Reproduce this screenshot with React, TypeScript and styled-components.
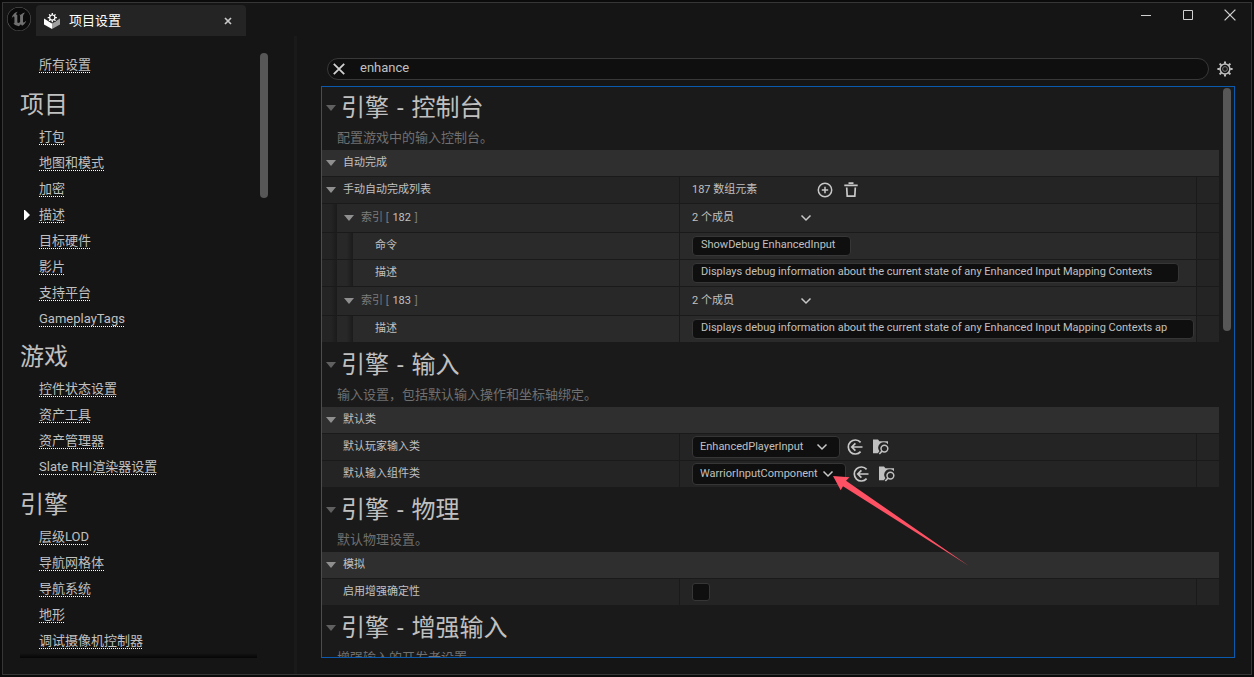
import React from "react";
import styled, { createGlobalStyle } from "styled-components";
import { SiUnrealengine } from "react-icons/si";

const GlobalStyle = createGlobalStyle`
  * { box-sizing: border-box; }
  html, body { margin: 0; padding: 0; background: #0b0b0b; }
  body, button, input, select {
    font-family: Roboto, "Noto Sans CJK SC", sans-serif;
    font-size: 11px;
    line-height: 16px;
    color: #c0c0c0;
  }
  h1, h2, p, ul { margin: 0; padding: 0; font-weight: 400; }
  svg { display: block; flex: none; }
`;

const Desktop = styled.div`
  display: flex;
  height: 100vh;
  padding: 2px;
`;

const Window = styled.div`
  flex: 1;
  min-width: 0;
  display: flex;
  flex-direction: column;
  background: #151515;
  border: 1px solid #363636;
`;

const TitleBar = styled.header`
  display: flex;
  flex: none;
  height: 33px;
  padding-left: 4px;
`;

const Logo = styled.div`
  width: 24px;
  height: 24px;
  margin: 4px 5px 0 0;
  border-radius: 50%;
  background: #0a0a0a;
  color: #707070;
`;

const Tab = styled.div`
  display: flex;
  align-items: center;
  width: 210px;
  margin-top: 2px;
  padding: 0 12px 0 8px;
  border-radius: 4px 4px 0 0;
  background: #242424;
`;

const TabTitle = styled.h1`
  flex: 1;
  margin-left: 9px;
  font-size: 13px;
  line-height: 16px;
  color: #ffffff;
`;

const IconButton = styled.button<{ $w?: number }>`
  display: flex;
  align-items: center;
  justify-content: center;
  flex: none;
  width: ${(p) => p.$w ?? 18}px;
  height: 18px;
  padding: 0;
  border: 0;
  background: none;
  color: #c0c0c0;
`;

const WindowButtons = styled.div`
  display: flex;
  margin-left: auto;
  padding: 3px 0 0;
`;

const Main = styled.div`
  flex: 1;
  min-height: 0;
  display: flex;
`;

const Sidebar = styled.nav`
  display: flex;
  flex: none;
  width: 291px;
  padding: 16px 26px 16px 17px;
`;

const SideList = styled.div`
  position: relative;
  flex: 1;
  overflow: hidden;
  &::after {
    content: "";
    position: absolute;
    left: 0;
    right: 3px;
    bottom: 0;
    height: 5px;
    background: linear-gradient(rgba(0, 0, 0, 0), #050505);
  }
`;

const SideHeading = styled.h2<{ $first?: boolean }>`
  padding: ${(p) => (p.$first ? 11 : 9)}px 0 3px;
  font-size: 24px;
  line-height: 32px;
`;

const SideItems = styled.ul`
  list-style: none;
`;

const SideItem = styled.li`
  display: flex;
  align-items: center;
  height: 26px;
  padding-left: 19px;
`;

const Marker = styled.span`
  width: 6px;
  height: 10px;
  margin: 0 9px 0 -15px;
  background: #ffffff;
  clip-path: polygon(0 0, 16% 0, 100% 50%, 16% 100%, 0 100%);
`;

const SideLink = styled.a`
  height: 16px;
  font-size: 13px;
  line-height: 16px;
  color: #c0c0c0;
  text-decoration: none;
  background: repeating-linear-gradient(90deg, #ffffff 0 1px, transparent 1px 2px) 0 100% / 100% 1px no-repeat;
`;

const Thumb = styled.div<{ $h: number }>`
  flex: none;
  width: 8px;
  height: ${(p) => p.$h}px;
  margin-top: 1px;
  border-radius: 4px;
  background: #575757;
`;

const Splitter = styled.div`
  flex: none;
  width: 3px;
  background: #1a1a1a;
`;

const Content = styled.main`
  flex: 1;
  min-width: 0;
  display: flex;
  flex-direction: column;
  padding: 22px 16px 16px 24px;
`;

const SearchRow = styled.div`
  display: flex;
  align-items: center;
  flex: none;
  margin-bottom: 6px;
  padding: 0 1px 0 6px;
`;

const SearchBox = styled.label`
  flex: 1;
  display: flex;
  align-items: center;
  height: 22px;
  margin-right: 7px;
  padding-left: 2px;
  border: 1px solid #383838;
  border-radius: 11px;
  background: #0f0f0f;
`;

const SearchInput = styled.input`
  flex: 1;
  height: 18px;
  margin: 0 12px;
  padding: 0 0 4px;
  border: 0;
  outline: 0;
  background: none;
  font-size: 13px;
`;

const Panel = styled.section`
  flex: 1;
  min-height: 0;
  display: flex;
  gap: 4px;
  padding-right: 3px;
  border: 1px solid #0a5ab0;
  background: #1a1a1a;
`;

const Details = styled.div`
  flex: 1;
  min-width: 0;
  overflow: hidden;
`;

const SectionHead = styled.div<{ $first?: boolean }>`
  display: grid;
  grid-template-columns: 19px 1fr;
  align-items: center;
  align-content: end;
  height: ${(p) => (p.$first ? 63 : 65)}px;
`;

const SectionTitle = styled.h2`
  font-size: 24px;
  line-height: 32px;
`;

const Dash = styled.span`
  padding: 0 2px;
`;

const SectionText = styled.p`
  grid-column: 1 / -1;
  padding: 6px 0 4px 15px;
  font-size: 13px;
  line-height: 16px;
  color: #707070;
`;

const Triangle = styled.span<{ $dim?: boolean }>`
  flex: none;
  width: 10px;
  height: 6px;
  margin-left: 4px;
  background: ${(p) => (p.$dim ? "#606060" : "#8f8f8f")};
  clip-path: polygon(0 0, 100% 0, 50% 100%);
`;

const Category = styled.div`
  display: flex;
  align-items: center;
  gap: 7px;
  height: 26px;
  background: #2f2f2f;
`;

const shades = ["#242424", "#282828", "#2a2a2a"];

const Row = styled.div<{ $tall?: boolean }>`
  display: grid;
  grid-template-columns: minmax(0, 357fr) minmax(0, 516fr) 22px;
  gap: 1px;
  height: ${(p) => (p.$tall ? 28 : 26)}px;
  margin-top: 1px;
`;

const NameCell = styled.div`
  display: flex;
`;

const Indent = styled.span<{ $w: number; $level: number }>`
  flex: none;
  width: ${(p) => p.$w}px;
  background: linear-gradient(90deg, ${(p) => shades[p.$level]} 60%, #1b1b1b);
`;

const NameBody = styled.div<{ $level: number; $leaf?: boolean }>`
  flex: 1;
  display: flex;
  align-items: center;
  gap: 7px;
  padding-left: ${(p) => (p.$leaf ? (p.$level === 0 ? 21 : 22) : p.$level === 0 ? 0 : 3)}px;
  background: ${(p) => shades[p.$level]};
`;

const ArrayIndex = styled.span`
  color: #7c7c7c;
  b { padding: 0 1px; font-weight: 400; color: #c0c0c0; }
`;

const ValueCell = styled.div<{ $level: number }>`
  position: relative;
  display: flex;
  align-items: center;
  padding: 0 2px 0 12px;
  background: ${(p) => shades[p.$level]};
`;

const EndCell = styled.div`
  background: #242424;
`;

const Count = styled.span<{ $w: number }>`
  width: ${(p) => p.$w}px;
`;

const TextField = styled.input<{ $w: number }>`
  width: ${(p) => p.$w}px;
  max-width: 100%;
  height: 20px;
  padding: 0 14px 3px 8px;
  border: 1px solid #363636;
  border-radius: 4px;
  outline: 0;
  background: #0f0f0f;
`;

const SelectBox = styled.div<{ $w: number }>`
  position: relative;
  width: ${(p) => p.$w}px;
  height: 22px;
  margin-right: 6px;
  svg {
    position: absolute;
    right: 12px;
    top: 7px;
    pointer-events: none;
  }
`;

const Select = styled.select`
  appearance: none;
  width: 100%;
  height: 22px;
  padding: 0 24px 0 7px;
  border: 1px solid #363636;
  border-radius: 4px;
  outline: 0;
  background: #0f0f0f;
`;

const Check = styled.input`
  appearance: none;
  width: 18px;
  height: 18px;
  margin: 0;
  border: 1px solid #363636;
  border-radius: 3px;
  background: #0f0f0f;
`;

const Pointer = styled.svg`
  position: absolute;
  left: 153px;
  top: 15px;
  z-index: 2;
  pointer-events: none;
`;

const Actions = styled.div`
  display: flex;
  gap: 8px;
`;

const Chevron = () => (
  <svg width="12" height="8" viewBox="0 0 12 8" fill="none" stroke="#c8c8c8" strokeWidth="1.5">
    <path d="M1.5 1.5 6 6l4.5-4.5" />
  </svg>
);

const PackageIcon = () => (
  <svg width="16" height="16" viewBox="0 0 16 16">
    <path d="M0 5.4 8 10.4V16L0 11.6z" fill="#fff" />
    <path d="M16 5.4 8 10.4V16l8-4.4z" fill="#a0a0a0" />
    <circle cx="8.3" cy="4.6" r="5" fill="#242424" />
    <circle cx="8.3" cy="4.6" r="2.6" fill="none" stroke="#fff" strokeWidth="1.2" />
    <path
      d="M8.3 0v2M8.3 7.2v2M3.7 4.6h2M10.9 4.6h2M5.1 1.4l1.3 1.3M10.2 6.5l1.3 1.3M5.1 7.8l1.3-1.3M10.2 2.7l1.3-1.3"
      stroke="#fff"
      strokeWidth="1.3"
    />
  </svg>
);

const GearIcon = () => (
  <svg width="16" height="16" viewBox="0 0 16 16" fill="none" stroke="#c0c0c0">
    <circle cx="8" cy="8" r="4.9" strokeWidth="1.5" />
    <circle cx="8" cy="8" r="2.4" stroke="#777" strokeWidth="1" />
    <path
      d="M8 .4v2.4M8 13.2v2.4M.4 8h2.4M13.2 8h2.4M2.6 2.6l1.7 1.7M11.7 11.7l1.7 1.7M2.6 13.4l1.7-1.7M11.7 4.3l1.7-1.7"
      strokeWidth="2"
    />
  </svg>
);

const PlusIcon = () => (
  <svg width="16" height="16" viewBox="0 0 16 16" fill="none" stroke="#c8c8c8" strokeWidth="1.5">
    <circle cx="8" cy="8" r="6.7" />
    <path d="M8 4.8v6.4M4.8 8h6.4" />
  </svg>
);

const TrashIcon = () => (
  <svg width="14" height="16" viewBox="0 0 14 16" fill="none" stroke="#c8c8c8">
    <path d="M4.5 1.2h5M.3 3.4h13.4" strokeWidth="1.7" />
    <path d="M2.7 5.5 3.2 14.2h7.6l.5-8.7" strokeWidth="1.7" />
  </svg>
);

const UseIcon = () => (
  <svg width="16" height="16" viewBox="0 0 16 16" fill="none" stroke="#c8c8c8" strokeWidth="1.7">
    <path d="M13.6 3.4A7 7 0 1 0 13.6 12.6" />
    <path d="M15.5 8H4.6M8.4 4.4 4.8 8l3.6 3.6" />
  </svg>
);

const BrowseIcon = () => (
  <svg width="16" height="16" viewBox="0 0 16 16">
    <path d="M0 .5h5l1.4 1.7H15v3A5.2 5.2 0 0 0 6.4 12.3L4.8 14.2H0z" fill="#c0c0c0" />
    <circle cx="11.4" cy="9.6" r="3.4" fill="none" stroke="#c0c0c0" strokeWidth="1.5" />
    <path d="M9 12.1 6.3 15" stroke="#c0c0c0" strokeWidth="1.6" />
  </svg>
);

type NavItem = { label: string; current?: boolean };

const groups: { title: string; items: NavItem[] }[] = [
  {
    title: "项目",
    items: [
      { label: "打包" },
      { label: "地图和模式" },
      { label: "加密" },
      { label: "描述", current: true },
      { label: "目标硬件" },
      { label: "影片" },
      { label: "支持平台" },
      { label: "GameplayTags" },
    ],
  },
  {
    title: "游戏",
    items: [{ label: "控件状态设置" }, { label: "资产工具" }, { label: "资产管理器" }, { label: "Slate RHI渲染器设置" }],
  },
  {
    title: "引擎",
    items: [
      { label: "层级LOD" },
      { label: "导航网格体" },
      { label: "导航系统" },
      { label: "地形" },
      { label: "调试摄像机控制器" },
    ],
  },
];

const Section = ({ title, text, first }: { title: string; text: string; first?: boolean }) => (
  <SectionHead $first={first}>
    <Triangle $dim />
    <SectionTitle>
      引擎<Dash> - </Dash>
      {title}
    </SectionTitle>
    <SectionText>{text}</SectionText>
  </SectionHead>
);

type PropertyProps = {
  name: React.ReactNode;
  level?: 0 | 1 | 2;
  leaf?: boolean;
  tall?: boolean;
  children: React.ReactNode;
};

const Property = ({ name, level = 0, leaf, tall, children }: PropertyProps) => (
  <Row $tall={tall}>
    <NameCell>
      {level > 0 && <Indent $w={15} $level={0} />}
      {level > 1 && <Indent $w={16} $level={1} />}
      <NameBody $level={level} $leaf={leaf}>
        {!leaf && <Triangle />}
        {name}
      </NameBody>
    </NameCell>
    <ValueCell $level={level}>{children}</ValueCell>
    <EndCell />
  </Row>
);

const IndexName = ({ n }: { n: number }) => (
  <ArrayIndex>
    索引 [ <b>{n}</b> ]
  </ArrayIndex>
);

const Members = () => (
  <>
    <Count $w={105}>2 个成员</Count>
    <IconButton aria-label="成员选项">
      <Chevron />
    </IconButton>
  </>
);

const ClassPicker = ({ id, value, width }: { id: string; value: string; width: number }) => (
  <>
    <SelectBox $w={width}>
      <Select id={id} defaultValue={value}>
        <option>{value}</option>
      </Select>
      <Chevron />
    </SelectBox>
    <Actions>
      <IconButton aria-label="使用选中项">
        <UseIcon />
      </IconButton>
      <IconButton aria-label="浏览">
        <BrowseIcon />
      </IconButton>
    </Actions>
  </>
);

export default function App() {
  return (
    <Desktop>
      <GlobalStyle />
      <Window>
        <TitleBar>
          <Logo>
            <SiUnrealengine size={24} />
          </Logo>
          <Tab>
            <PackageIcon />
            <TabTitle>项目设置</TabTitle>
            <IconButton $w={12} aria-label="关闭标签页">
              <svg width="8" height="8" viewBox="0 0 8 8" stroke="#c8c8c8" strokeWidth="1.7">
                <path d="M1 1l6 6M7 1 1 7" />
              </svg>
            </IconButton>
          </Tab>
          <WindowButtons>
            <IconButton $w={42} aria-label="最小化">
              <svg width="12" height="12" viewBox="0 0 12 12" stroke="#d0d0d0">
                <path d="M1 6.5h10" />
              </svg>
            </IconButton>
            <IconButton $w={42} aria-label="最大化">
              <svg width="12" height="12" viewBox="0 0 12 12" fill="none" stroke="#d0d0d0">
                <path d="M1.5 1.5h9v9h-9z" />
              </svg>
            </IconButton>
            <IconButton $w={42} aria-label="关闭">
              <svg width="12" height="12" viewBox="0 0 12 12" stroke="#d0d0d0" strokeWidth="1.3">
                <path d="M.6.6l10.8 10.8M11.4.6.6 11.4" />
              </svg>
            </IconButton>
          </WindowButtons>
        </TitleBar>
        <Main>
          <Sidebar aria-label="设置分类">
            <SideList>
              <SideItems>
                <SideItem>
                  <SideLink href="#all">所有设置</SideLink>
                </SideItem>
              </SideItems>
              {groups.map((g, i) => (
                <React.Fragment key={g.title}>
                  <SideHeading $first={i === 0}>{g.title}</SideHeading>
                  <SideItems>
                    {g.items.map((item) => (
                      <SideItem key={item.label}>
                        {item.current && <Marker />}
                        <SideLink href={"#" + item.label}>{item.label}</SideLink>
                      </SideItem>
                    ))}
                  </SideItems>
                </React.Fragment>
              ))}
            </SideList>
            <Thumb $h={145} />
          </Sidebar>
          <Splitter />
          <Content>
            <SearchRow>
              <SearchBox>
                <IconButton aria-label="清除搜索">
                  <svg width="12" height="12" viewBox="0 0 12 12" stroke="#d0d0d0" strokeWidth="1.8">
                    <path d="M.8.8l10.4 10.4M11.2.8.8 11.2" />
                  </svg>
                </IconButton>
                <SearchInput aria-label="搜索" defaultValue="enhance" />
              </SearchBox>
              <IconButton aria-label="设置选项">
                <GearIcon />
              </IconButton>
            </SearchRow>
            <Panel>
              <Details>
                <Section first title="控制台" text="配置游戏中的输入控制台。" />
                <Category>
                  <Triangle />
                  自动完成
                </Category>
                <Property name="手动自动完成列表">
                  <Count $w={124}>187 数组元素</Count>
                  <Actions>
                    <IconButton aria-label="添加元素">
                      <PlusIcon />
                    </IconButton>
                    <IconButton aria-label="移除所有元素">
                      <TrashIcon />
                    </IconButton>
                  </Actions>
                </Property>
                <Property level={1} tall name={<IndexName n={182} />}>
                  <Members />
                </Property>
                <Property level={2} leaf name={<label htmlFor="command-182">命令</label>}>
                  <TextField $w={159} id="command-182" defaultValue="ShowDebug EnhancedInput" />
                </Property>
                <Property level={2} leaf name={<label htmlFor="text-182">描述</label>}>
                  <TextField
                    $w={487}
                    id="text-182"
                    defaultValue="Displays debug information about the current state of any Enhanced Input Mapping Contexts"
                  />
                </Property>
                <Property level={1} tall name={<IndexName n={183} />}>
                  <Members />
                </Property>
                <Property level={2} leaf name={<label htmlFor="text-183">描述</label>}>
                  <TextField
                    $w={502}
                    id="text-183"
                    defaultValue="Displays debug information about the current state of any Enhanced Input Mapping Contexts ap"
                  />
                </Property>

                <Section title="输入" text="输入设置，包括默认输入操作和坐标轴绑定。" />
                <Category>
                  <Triangle />
                  默认类
                </Category>
                <Property leaf name={<label htmlFor="player-input">默认玩家输入类</label>}>
                  <ClassPicker id="player-input" value="EnhancedPlayerInput" width={148} />
                </Property>
                <Property leaf name={<label htmlFor="input-component">默认输入组件类</label>}>
                  <ClassPicker id="input-component" value="WarriorInputComponent" width={154} />
                  <Pointer width="137" height="92" viewBox="0 0 137 92">
                    <path d="M0 0 16.5 1.3 13 4.7 136 90 10 10.3 7.7 14.3z" fill="#ff5164" />
                  </Pointer>
                </Property>

                <Section title="物理" text="默认物理设置。" />
                <Category>
                  <Triangle />
                  模拟
                </Category>
                <Property leaf name={<label htmlFor="determinism">启用增强确定性</label>}>
                  <Check type="checkbox" id="determinism" />
                </Property>

                <Section title="增强输入" text="增强输入的开发者设置。" />
              </Details>
              <Thumb $h={243} />
            </Panel>
          </Content>
        </Main>
      </Window>
    </Desktop>
  );
}
